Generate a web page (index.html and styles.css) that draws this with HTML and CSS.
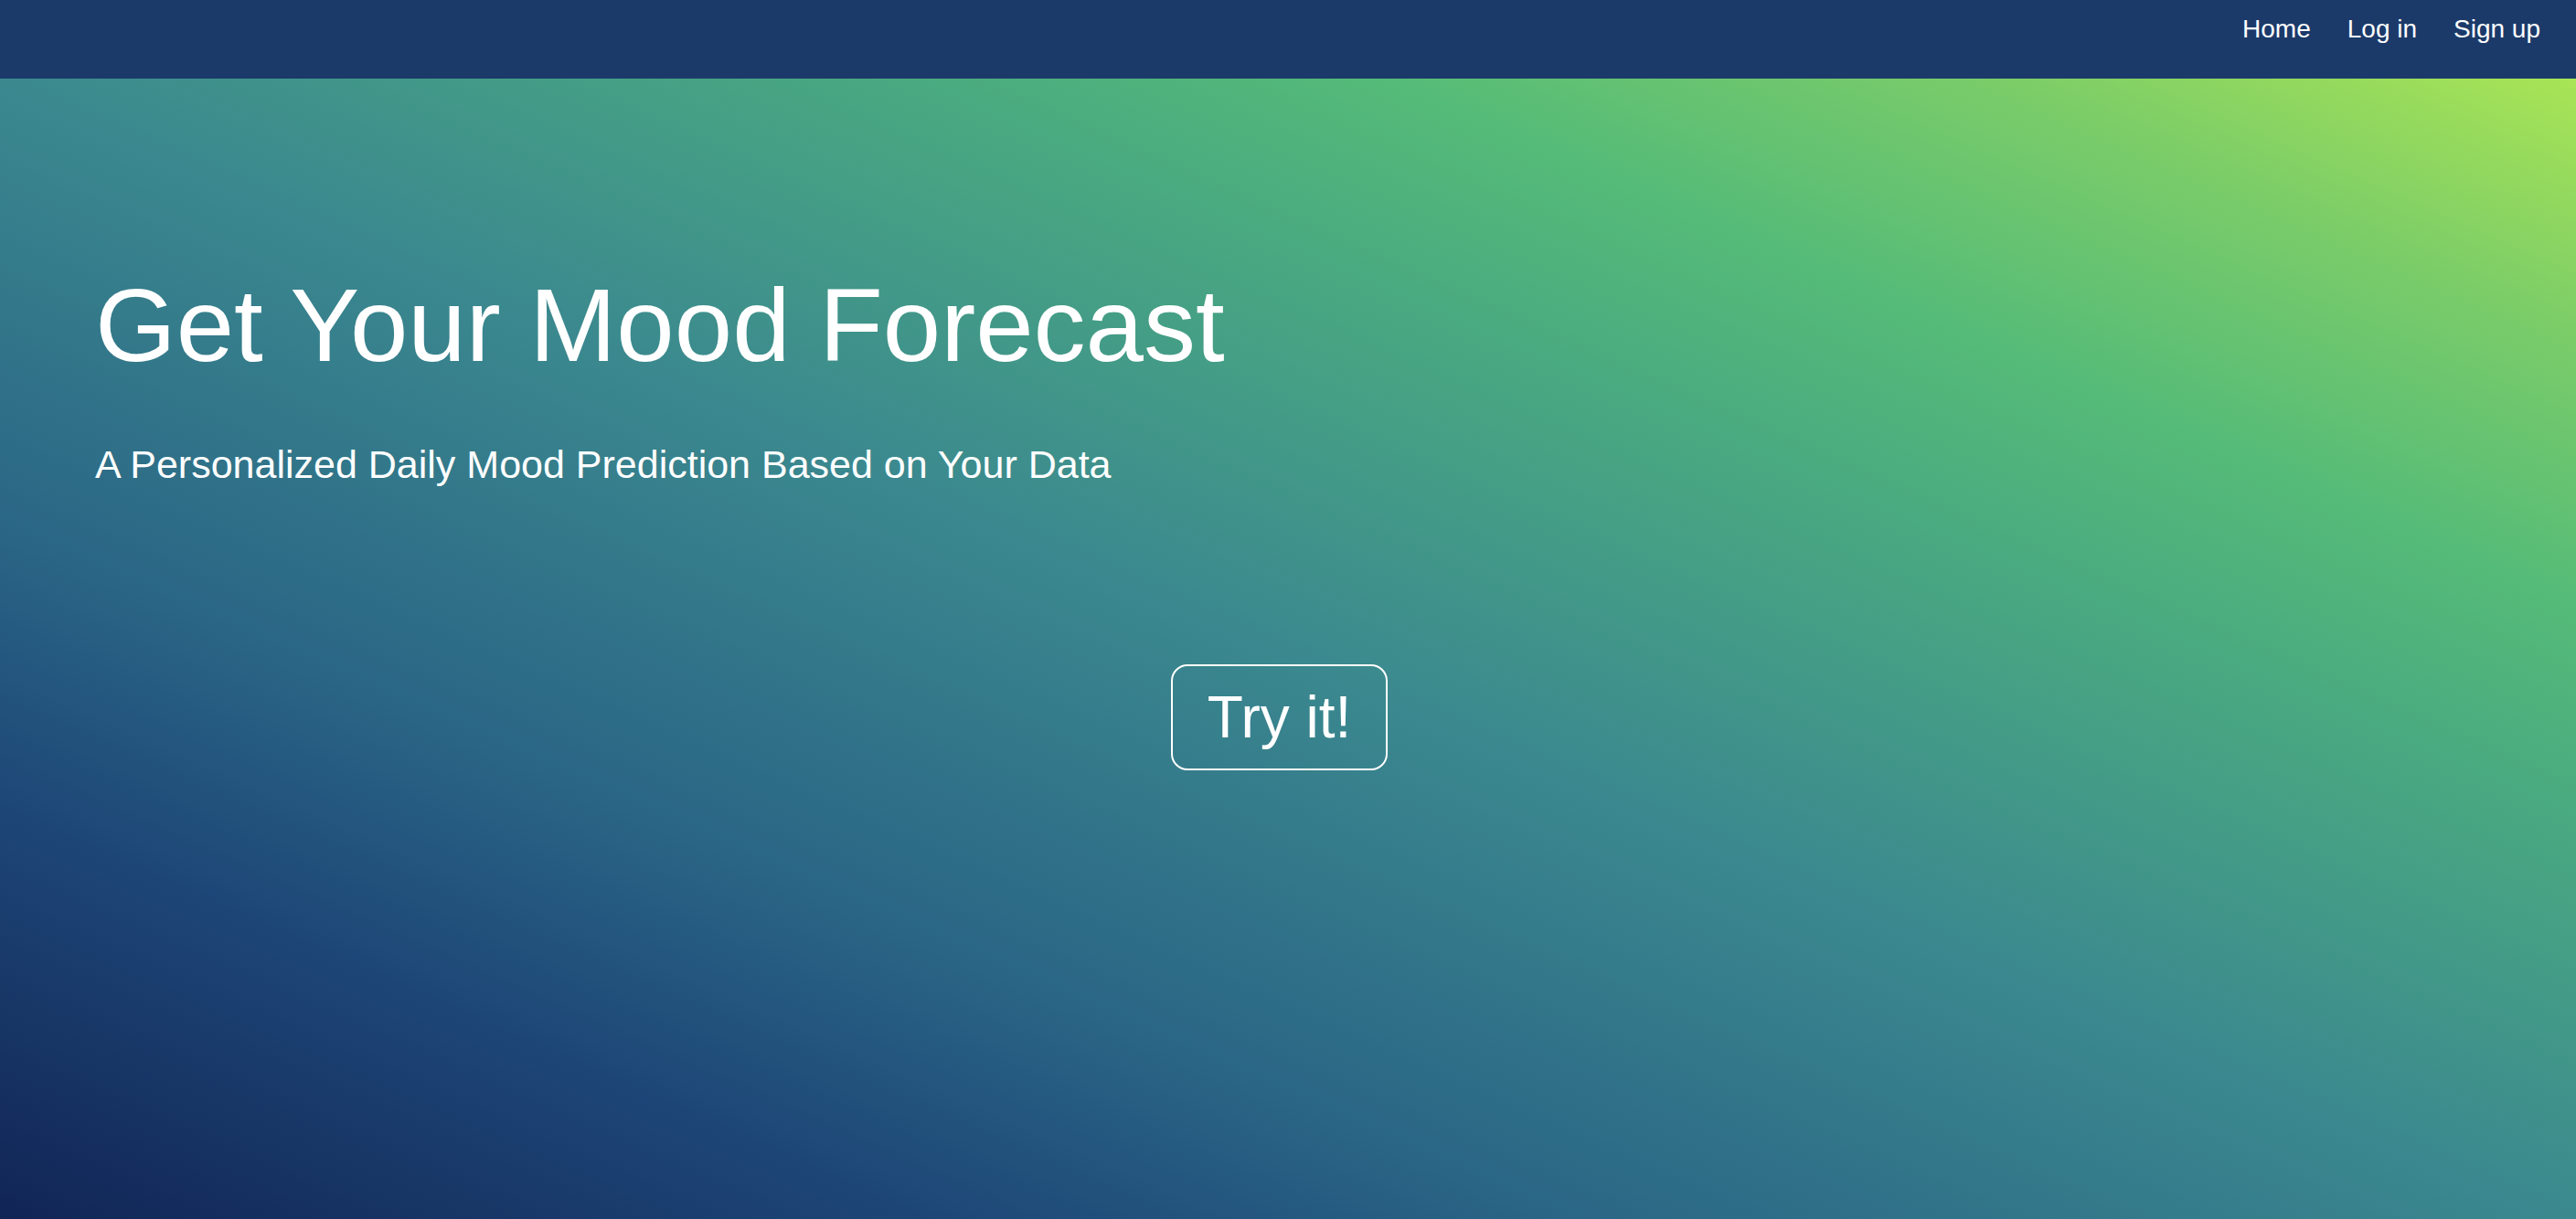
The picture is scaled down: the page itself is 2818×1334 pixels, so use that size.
FILE: index.html
```html
<!DOCTYPE html>
<html lang="en">
<head>
<meta charset="utf-8">
<title>Mood Forecast</title>
<link rel="stylesheet" href="styles.css">
</head>
<body>
<nav class="topbar">
  <a class="nav-link" href="#">Home</a>
  <a class="nav-link" href="#">Log in</a>
  <a class="nav-link" href="#">Sign up</a>
</nav>
<main class="hero">
  <h1 class="hero-title">Get Your Mood Forecast</h1>
  <p class="hero-subtitle">A Personalized Daily Mood Prediction Based on Your Data</p>
  <div class="cta-row">
    <a class="cta" href="#">Try it!</a>
  </div>
</main>
</body>
</html>
```

FILE: styles.css
```css
html, body {
  margin: 0;
  padding: 0;
}
body {
  min-height: 100vh;
  display: flex;
  flex-direction: column;
  font-family: "Liberation Sans", Arial, Helvetica, sans-serif;
  color: #ffffff;
}
.topbar {
  height: 86px;
  box-sizing: border-box;
  background: #1b3a6a;
  display: flex;
  justify-content: flex-end;
  align-items: flex-start;
  gap: 40px;
  padding: 16px 39px 0 0;
}
.nav-link {
  color: #ffffff;
  text-decoration: none;
  font-size: 28px;
  line-height: normal;
}
.hero {
  flex: 1;
  box-sizing: border-box;
  padding: 202px 123px 0 104px;
  background: linear-gradient(to top right,
    #112555 0%,
    #1d4677 18%,
    #2a6585 30%,
    #3b898f 50%,
    #4aaa80 68%,
    #55bb78 77%,
    #7ccd68 89%,
    #a9e455 100%);
}
.hero-title {
  margin: 0;
  font-size: 114px;
  font-weight: 400;
  line-height: 1.2;
}
.hero-subtitle {
  margin: 58px 0 0;
  font-size: 43px;
  line-height: 1.2;
}
.cta-row {
  margin-top: 193px;
  display: flex;
  justify-content: center;
}
.cta {
  color: #ffffff;
  text-decoration: none;
  font-size: 64px;
  line-height: normal;
  padding: 19px 38px;
  border: 2px solid #ffffff;
  border-radius: 18px;
}
```
